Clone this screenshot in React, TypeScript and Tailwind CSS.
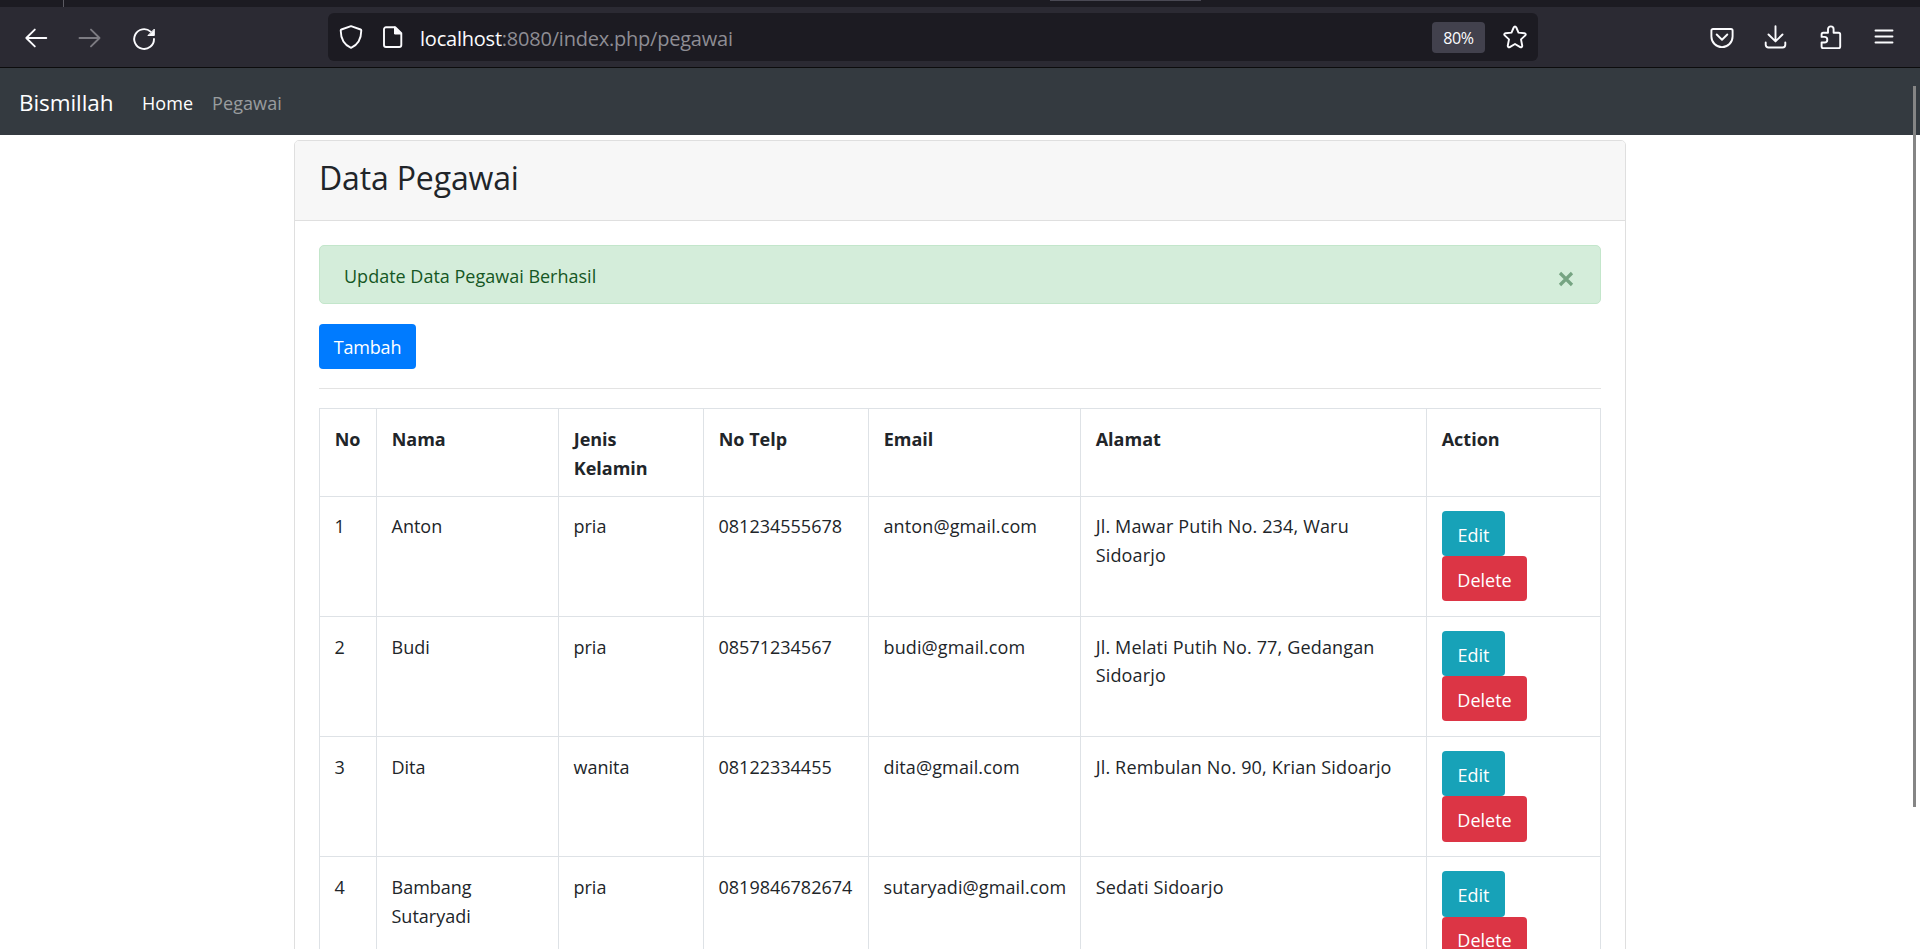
import type { ReactNode } from "react";

type Pegawai = {
  no: number;
  nama: string;
  kelamin: string;
  telp: string;
  email: string;
  alamat: string;
};

const rows: Pegawai[] = [
  { no: 1, nama: "Anton", kelamin: "pria", telp: "081234555678", email: "anton@gmail.com", alamat: "Jl. Mawar Putih No. 234, Waru Sidoarjo" },
  { no: 2, nama: "Budi", kelamin: "pria", telp: "08571234567", email: "budi@gmail.com", alamat: "Jl. Melati Putih No. 77, Gedangan Sidoarjo" },
  { no: 3, nama: "Dita", kelamin: "wanita", telp: "08122334455", email: "dita@gmail.com", alamat: "Jl. Rembulan No. 90, Krian Sidoarjo" },
  { no: 4, nama: "Bambang Sutaryadi", kelamin: "pria", telp: "0819846782674", email: "sutaryadi@gmail.com", alamat: "Sedati Sidoarjo" },
];

const headings = ["No", "Nama", "Jenis Kelamin", "No Telp", "Email", "Alamat", "Action"];

function Icon({ children, className = "" }: { children: ReactNode; className?: string }) {
  return (
    <svg
      viewBox="0 0 24 24"
      className={`h-6 w-6 shrink-0 overflow-visible ${className}`}
      fill="none"
      stroke="currentColor"
      strokeWidth="1.9"
      strokeLinecap="round"
      strokeLinejoin="round"
    >
      {children}
    </svg>
  );
}

function BrowserToolbar() {
  return (
    <header className="shrink-0">
      <div className="flex h-[7px] bg-[#1c1b22]">
        <div className="ml-[63px] w-px bg-[#5b5a62]" />
        <div className="ml-[986px] h-px w-[151px] bg-[#4a4954]" />
      </div>
      <div className="flex h-[60px] items-center bg-[#2b2a33] text-[#fbfbfe]">
        <div className="flex w-[328px] gap-[30px] pl-6">
          <Icon>
            <path d="M2.300 13h20M10.800 4.600L2.300 13l8.500 8.400" />
          </Icon>
          <Icon className="text-[#7c7b82]">
            <path d="M1.500 13h20M13 4.600l8.500 8.400-8.500 8.400" />
          </Icon>
          <Icon>
            <path d="M18.600 6.600A9.900 9.900 0 1 0 22 14" />
            <path d="M22.300 4.500v6h-6z" fill="currentColor" strokeWidth="1" />
          </Icon>
        </div>
        <div className="flex h-12 w-[1210px] items-center rounded-[6px] bg-[#1c1b22]">
          <Icon className="ml-[11px]">
            <path d="M12 1.100L21.600 4.500c.5.200.7.500.7 1C22.200 13.500 18.600 20 12 22.900 5.400 20 1.800 13.500 1.700 5.500c0-.5.200-.8.700-1z" />
          </Icon>
          <Icon className="ml-[18px]">
            <path d="M5 2.300h9.200L20.300 8.300V20a2 2 0 0 1-2 2H5a2 2 0 0 1-2-2V4.300a2 2 0 0 1 2-2z" />
            <path d="M13.500 2.300V9h6.800z" fill="currentColor" strokeWidth="1" />
          </Icon>
          <p className="ml-[15px] pt-[3px] text-[20px] leading-[28px] tracking-[-0.220px] text-[#8e8d94]">
            <span className="text-[#fbfbfe]">localhost</span>:8080/index.php/pegawai
          </p>
          <div className="mr-[18px] ml-auto flex h-[31px] w-[53px] items-center justify-center rounded-[4px] bg-[#42414d] pt-0.5 text-[16px]">
            <span className="tracking-[-0.400px]">80%</span>
          </div>
          <Icon className="mr-[11px]">
            <path d="M12 1.500c.7 0 1 .4 1.300 1L15.500 7.600l5.900.6c1.300.2 1.800 1.300.9 2.200L18 14.400l1.200 6.100c.2 1.300-.8 2.200-2 1.600L12 19l-5.200 3.100c-1.200.6-2.200-.3-2-1.600L6 14.400 1.700 10.400c-.9-.9-.4-2 .9-2.200l5.900-.6 2.200-5.100c.3-.6.600-1 1.300-1z" />
          </Icon>
        </div>
        <div className="ml-[172px] flex gap-[30px]">
          <Icon>
            <path d="M3 4h18a1.600 1.600 0 0 1 1.600 1.600V11.500a10.600 10.600 0 0 1-21.200 0V5.600A1.600 1.600 0 0 1 3 4z" />
            <path d="M6.700 9.500l5.300 5.200 5.300-5.200" />
          </Icon>
          <Icon>
            <path d="M11.500 1.300V16M4.500 9.500l7 6.900 7-6.900M1.700 17.500v2.300a2.700 2.700 0 0 0 2.700 2.700h14.200a2.700 2.700 0 0 0 2.700-2.700v-2.300" />
          </Icon>
          <Icon>
            <path d="M10 7.800V4.200a2.800 2.800 0 0 1 5.600 0v3.600h5a1.600 1.600 0 0 1 1.600 1.600v12.100a1.600 1.600 0 0 1-1.600 1.600H5.200a1.600 1.600 0 0 1-1.600-1.600v-4h2.900a2.800 2.800 0 0 0 0-5.600H3.600V9.400a1.600 1.600 0 0 1 1.600-1.600z" />
          </Icon>
          <Icon>
            <path d="M3.500 5.500h17M3.500 11.500h17M3.500 17.500h17" />
          </Icon>
        </div>
      </div>
      <div className="h-px bg-[#0c0c0d]" />
    </header>
  );
}

export default function App() {
  return (
    <div className="relative flex h-[949px] w-[1920px] flex-col overflow-hidden bg-white font-['Open_Sans','Noto_Sans',sans-serif] text-[18px] leading-[28.800px] text-[#212529]">
      <BrowserToolbar />
      <nav className="flex h-[67px] shrink-0 items-center bg-[#343a40] pt-1 pl-[19px]">
        <a className="w-[123px] text-[22.500px] tracking-[-0.080px] text-white">Bismillah</a>
        <a className="w-[70px] tracking-[0.100px] text-white">Home</a>
        <a className="tracking-[0.100px] text-white/50">Pegawai</a>
      </nav>

      <main className="mx-auto mt-[5px] h-[1000px] w-[1332px] shrink-0 rounded-t-[5px] border border-[#dfdfdf]">
        <div className="h-20 rounded-t-[4px] border-b border-[#dfdfdf] bg-[#f7f7f7] pt-[17px] pl-6">
          <h3 className="text-[32px] leading-[40px] tracking-[-0.150px]">Data Pegawai</h3>
        </div>
        <div className="px-6 pt-6">
          <div className="flex h-[59px] items-center justify-between rounded-[5px] border border-[#c3e6cb] bg-[#d4edda] pr-[26px] pl-6 text-[#155724]">
            <span className="pt-1">Update Data Pegawai Berhasil</span>
            <svg viewBox="0 0 16 16" className="mt-[9px] h-4 w-4" stroke="#76a482" strokeWidth="3.200">
              <path d="M2 2l12 12M14 2L2 14" />
            </svg>
          </div>
          <button className="mt-5 flex h-[45px] w-[97px] items-center justify-center rounded-[4px] bg-[#007bff] pt-0.5 tracking-[-0.150px] text-white">
            Tambah
          </button>
          <hr className="mt-[19px] border-[#e3e3e3]" />
          <table className="mt-[18.700px] w-[1282px] table-fixed border-separate border-spacing-0 border-r border-[#dee2e6] text-left">
            <colgroup>
              <col className="w-[57px]" />
              <col className="w-[182px]" />
              <col className="w-[145px]" />
              <col className="w-[165px]" />
              <col className="w-[212px]" />
              <col className="w-[346px]" />
              <col className="w-[174px]" />
            </colgroup>
            <thead>
              <tr className="h-[88px] align-top">
                {headings.map((h) => (
                  <th key={h} className="border-t border-l border-[#dee2e6] pt-4 pr-[14px] pl-[14.700px] leading-[29px] font-bold">
                    {h}
                  </th>
                ))}
              </tr>
            </thead>
            <tbody>
              {rows.map((r) => (
                <tr key={r.no} className="h-[120.200px] align-top">
                  {[r.no, r.nama, r.kelamin, r.telp].map((v, i) => (
                    <td key={i} className="border-t border-l border-[#dee2e6] pt-[15.750px] pr-[14px] pl-[14.500px]">
                      {v}
                    </td>
                  ))}
                  <td className="border-t border-l border-[#dee2e6] pt-[15.750px] pl-[14.500px] tracking-[0.120px]">
                    {r.email}
                  </td>
                  <td className="border-t border-l border-[#dee2e6] pt-[15.750px] pr-[14px] pl-[14.700px] tracking-[0.160px]">
                    {r.alamat}
                  </td>
                  <td className="border-t border-l border-[#dee2e6] pt-[14.200px] pl-[15px] text-white">
                    <button className="flex h-[45.200px] w-[63px] items-center justify-center rounded-[4px] bg-[#17a2b8] pt-[3px]">
                      Edit
                    </button>
                    <button className="flex h-[45.200px] w-[85px] items-center justify-center rounded-[4px] bg-[#dc3545] pt-[3px]">
                      Delete
                    </button>
                  </td>
                </tr>
              ))}
            </tbody>
          </table>
        </div>
      </main>
      <div className="absolute top-[86px] right-[4px] h-[721px] w-[3px] bg-[#858585]" />
    </div>
  );
}
